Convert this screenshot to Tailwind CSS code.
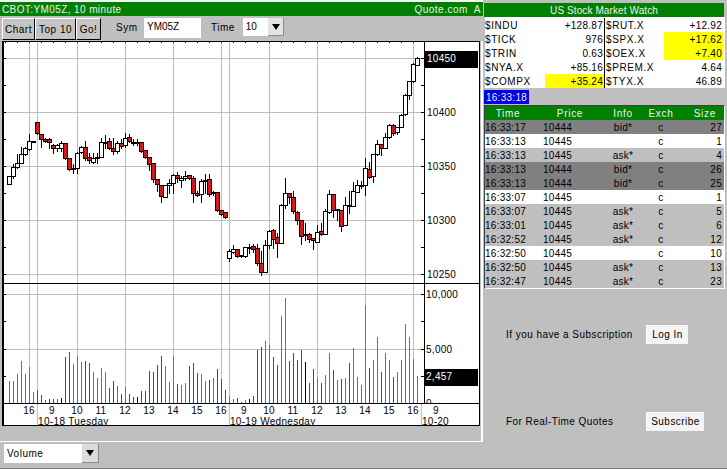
<!DOCTYPE html>
<html lang="en">
<head>
  <meta charset="UTF-8">
  <title>Quote.com - CBOT:YM05Z</title>
  <script src="https://cdn.jsdelivr.net/npm/@tailwindcss/browser@4"></script>
</head>
<body class="bg-[#bfbfbf]">
  <div class="w-[727px] h-[469px] flex overflow-hidden bg-[#bfbfbf] text-[10px] tracking-[0.27px] leading-[16px] text-black font-['Liberation_Sans',Arial,sans-serif] border-b border-[#808080]">

    <!-- left: chart window -->
    <div class="w-[483px] shrink-0 flex flex-col">
      <div class="h-[2px] bg-[#f4f4f4]"></div>
      <div class="h-[14px] bg-[#008000] text-[#f0f0f0] flex justify-between pl-[2px] pr-[2px] tracking-[0.4px]">
        <span>CBOT:YM05Z, 10 minute</span>
        <span class="tracking-[0.5px]">Quote.com&nbsp; A</span>
      </div>
      <div class="h-[25px] flex items-start pl-[2px] pt-[2px] tracking-[0.5px]">
        <button class="h-[22px] w-[33px] pt-[2px] border border-t-white border-l-white border-r-black border-b-black bg-[#c4c4c4]">Chart</button>
        <button class="h-[22px] w-[41px] pt-[2px] border border-t-white border-l-white border-r-black border-b-black bg-[#c4c4c4]">Top 10</button>
        <button class="h-[22px] w-[25px] pt-[2px] border border-t-white border-l-white border-r-black border-b-black bg-[#c4c4c4]">Go!</button>
        <span class="ml-[15px] mt-[2px] w-[28px]">Sym</span>
        <div class="w-[57px] h-[20px] bg-white pl-[3px] pt-[1px] tracking-normal">YM05Z</div>
        <span class="ml-[10px] mt-[2px] w-[32px]">Time</span>
        <div class="w-[25px] h-[18px] bg-white pl-[0px] pt-[1px] tracking-normal">&nbsp;10</div>
        <div class="w-[16px] h-[18px] bg-[#e4e4e4] border-r border-b border-[#8a8a8a] flex items-center justify-center">
          <svg width="8" height="6" viewBox="0 0 8 6"><path d="M0 0H8L4 6Z" fill="#000"/></svg>
        </div>
      </div>
      <div class="h-[401px] border-r-2 border-b border-white">
        <svg id="chart" class="block" width="480" height="385" viewBox="0 41 480 385" font-family="Liberation Sans, Arial, sans-serif" font-size="10" letter-spacing=".27" shape-rendering="crispEdges"></svg>
      </div>
      <div class="flex pl-[4px] pt-[2px]">
        <div class="w-[78px] h-[19px] bg-white pl-[3px] pt-[2px] tracking-[0.5px]">Volume</div>
        <div class="w-[17px] h-[19px] bg-[#dcdcdc] border-r border-b border-[#8a8a8a] flex items-center justify-center">
          <svg width="8" height="6" viewBox="0 0 8 6"><path d="M0 0H8L4 6Z" fill="#000"/></svg>
        </div>
      </div>
    </div>

    <!-- right: market watch and time and sales -->
    <div class="flex-1 flex flex-col pl-[1px]">
      <div class="h-[3px]"></div>
      <div class="h-[14px] mr-[3px] bg-[#008000] text-[#f0f0f0] text-center tracking-[0.1px]">US Stock Market Watch</div>
      <div class="h-[71px] mr-[2px] ml-[1px] bg-white grid grid-cols-[120px_1fr] pt-[1px]">
        <div class="border-r border-black">
          <div class="h-[14px] flex justify-between pr-[1px]"><span class="tracking-[0.6px]">$INDU</span><span>+128.87</span></div>
          <div class="h-[14px] flex justify-between pr-[1px]"><span class="tracking-[0.6px]">$TICK</span><span>976</span></div>
          <div class="h-[14px] flex justify-between pr-[1px]"><span class="tracking-[0.6px]">$TRIN</span><span>0.63</span></div>
          <div class="h-[14px] flex justify-between pr-[1px]"><span class="tracking-[0.6px]">$NYA.X</span><span>+85.16</span></div>
          <div class="h-[14px] flex justify-between"><span class="tracking-[0.6px]">$COMPX</span><span class="w-[59px] h-[14px] bg-[#ffff00] text-right pr-[1px]">+35.24</span></div>
        </div>
        <div class="pl-[1px]">
          <div class="h-[14px] flex justify-between pr-[3px]"><span class="tracking-[0.6px]">$RUT.X</span><span>+12.92</span></div>
          <div class="h-[14px] flex justify-between pr-[2px]"><span class="tracking-[0.6px]">$SPX.X</span><span class="w-[59px] h-[14px] bg-[#ffff00] text-right pr-[1px]">+17.62</span></div>
          <div class="h-[14px] flex justify-between pr-[2px]"><span class="tracking-[0.6px]">$OEX.X</span><span class="w-[59px] h-[14px] bg-[#ffff00] text-right pr-[1px]">+7.40</span></div>
          <div class="h-[14px] flex justify-between pr-[3px]"><span class="tracking-[0.6px]">$PREM.X</span><span>4.64</span></div>
          <div class="h-[14px] flex justify-between pr-[3px]"><span class="tracking-[0.6px]">$TYX.X</span><span>46.89</span></div>
        </div>
      </div>
      <div class="h-[17px] pt-[2px] flex items-start">
        <span class="block w-[45px] h-[14px] bg-[#0000e6] text-[#f0f0f0] text-center">16:33:18</span>
      </div>

      <div class="mr-[2px] border-l border-[#404040] border-t border-t-[#404040] border-b border-b-white border-r border-r-white">
        <div class="h-[14px] flex bg-[#008000] text-[#f0f0f0] tracking-[0.7px]">
          <span class="w-[46px] text-center">Time</span>
          <span class="w-[78px] text-center">Price</span>
          <span class="w-[28px] text-center">Info</span>
          <span class="w-[48px] text-center">Exch</span>
          <span class="flex-1 text-right pr-[8px]">Size</span>
        </div>
        <div class="h-[14px] flex bg-[#808080]"><span class="w-[58px]">16:33:17</span><span class="w-[60px]">10444</span><span class="w-[40px] text-center">bid*</span><span class="w-[36px] text-center">c</span><span class="flex-1 text-right pr-[2px]">27</span></div>
        <div class="h-[14px] flex bg-white"><span class="w-[58px]">16:33:13</span><span class="w-[60px]">10445</span><span class="w-[40px] text-center"></span><span class="w-[36px] text-center">c</span><span class="flex-1 text-right pr-[2px]">1</span></div>
        <div class="h-[14px] flex bg-[#bfbfbf]"><span class="w-[58px]">16:33:13</span><span class="w-[60px]">10445</span><span class="w-[40px] text-center">ask*</span><span class="w-[36px] text-center">c</span><span class="flex-1 text-right pr-[2px]">4</span></div>
        <div class="h-[14px] flex bg-[#808080]"><span class="w-[58px]">16:33:13</span><span class="w-[60px]">10444</span><span class="w-[40px] text-center">bid*</span><span class="w-[36px] text-center">c</span><span class="flex-1 text-right pr-[2px]">26</span></div>
        <div class="h-[14px] flex bg-[#808080]"><span class="w-[58px]">16:33:13</span><span class="w-[60px]">10444</span><span class="w-[40px] text-center">bid*</span><span class="w-[36px] text-center">c</span><span class="flex-1 text-right pr-[2px]">25</span></div>
        <div class="h-[14px] flex bg-white"><span class="w-[58px]">16:33:07</span><span class="w-[60px]">10445</span><span class="w-[40px] text-center"></span><span class="w-[36px] text-center">c</span><span class="flex-1 text-right pr-[2px]">1</span></div>
        <div class="h-[14px] flex bg-[#bfbfbf]"><span class="w-[58px]">16:33:07</span><span class="w-[60px]">10445</span><span class="w-[40px] text-center">ask*</span><span class="w-[36px] text-center">c</span><span class="flex-1 text-right pr-[2px]">5</span></div>
        <div class="h-[14px] flex bg-[#bfbfbf]"><span class="w-[58px]">16:33:01</span><span class="w-[60px]">10445</span><span class="w-[40px] text-center">ask*</span><span class="w-[36px] text-center">c</span><span class="flex-1 text-right pr-[2px]">6</span></div>
        <div class="h-[14px] flex bg-[#bfbfbf]"><span class="w-[58px]">16:32:52</span><span class="w-[60px]">10445</span><span class="w-[40px] text-center">ask*</span><span class="w-[36px] text-center">c</span><span class="flex-1 text-right pr-[2px]">12</span></div>
        <div class="h-[14px] flex bg-white"><span class="w-[58px]">16:32:50</span><span class="w-[60px]">10445</span><span class="w-[40px] text-center"></span><span class="w-[36px] text-center">c</span><span class="flex-1 text-right pr-[2px]">10</span></div>
        <div class="h-[14px] flex bg-[#bfbfbf]"><span class="w-[58px]">16:32:50</span><span class="w-[60px]">10445</span><span class="w-[40px] text-center">ask*</span><span class="w-[36px] text-center">c</span><span class="flex-1 text-right pr-[2px]">13</span></div>
        <div class="h-[14px] flex bg-[#bfbfbf]"><span class="w-[58px]">16:32:47</span><span class="w-[60px]">10445</span><span class="w-[40px] text-center">ask*</span><span class="w-[36px] text-center">c</span><span class="flex-1 text-right pr-[2px]">23</span></div>
      </div>

      <div class="flex items-center mt-[36px] pl-[22px] tracking-[0.45px]">
        <span class="w-[140px]">If you have a Subscription</span>
        <button class="w-[42px] h-[19px] bg-[#f4f4f4] border-t border-l border-white">Log In</button>
      </div>
      <div class="flex items-center mt-[68px] pl-[22px] tracking-[0.45px]">
        <span class="w-[140px]">For Real-Time Quotes</span>
        <button class="w-[58px] h-[19px] bg-[#f4f4f4] border-t border-l border-white">Subscribe</button>
      </div>
    </div>
  </div>

  <script>
    // [body top, body bottom, wick top, wick bottom, red?] in 1/3 px, read off the chart
    const tue = [
      [199,223,199,223,0],[171,199,158,205,0],[160,172,130,175,0],[133,160,108,160,0],[115,133,108,135,0],[94,118,70,120,0],[92,94,90,96,0],
      [37,70,37,72,1],[73,88,70,112,1],[86,92,82,96,1],[86,97,80,115,1],[104,115,100,128,1],[104,115,100,122,0],[100,115,90,122,0],
      [100,145,98,148,1],[145,178,145,180,1],[175,178,160,190,0],[130,174,122,190,0],[112,127,105,130,0],[112,145,90,150,1],[142,151,125,158,1],
      [145,155,125,160,0],[140,142,125,160,0],[97,140,80,140,0],[95,97,72,115,0],[94,115,80,118,1],[113,124,80,132,1],[100,124,90,128,0],
      [100,109,85,115,1],[85,104,67,112,0],[82,94,70,97,1],[97,99,85,105,0],[97,98,85,105,0],[97,124,95,125,1],[121,142,120,145,1],
      [142,163,140,180,1],[160,208,158,215,1],[208,223,205,242,1],[226,258,224,275,1],[226,262,225,262,0],[218,226,205,250,0],[196,220,190,250,0],
      [196,205,182,215,1],[205,211,195,230,0],[199,205,180,210,0],[196,205,195,208,1],[205,250,195,275,1],[250,256,240,258,1],[213,253,205,275,0],
      [211,214,190,250,0],[208,253,190,258,1],[247,250,240,255,0],[247,300,245,302,1],[301,313,298,316,1],[307,322,305,325,1]
    ];
    const wed = [
      [633,653,625,662,0],[626,636,612,640,0],[628,647,625,650,1],[645,649,645,650,0],[622,648,620,650,0],[620,622,610,640,0],[619,628,608,635,1],
      [625,668,610,675,1],[670,697,630,705,1],[616,697,598,697,0],[574,616,568,625,0],[571,598,565,625,1],[592,610,575,652,1],[496,610,488,610,0],
      [460,496,412,505,0],[460,472,455,490,1],[472,514,450,520,1],[517,541,510,552,1],[541,589,540,612,1],[583,586,545,600,0],[583,596,575,605,1],
      [595,600,590,628,1],[577,607,552,607,0],[574,583,545,585,1],[514,583,505,583,0],[463,517,448,520,0],[463,511,462,530,1],[508,511,505,540,0],
      [511,559,508,572,1],[496,556,468,556,0],[494,497,450,520,0],[454,497,422,497,0],[436,455,418,455,0],[436,438,420,445,0],[385,436,352,465,0],
      [388,412,362,415,1],[343,409,342,425,0],[313,343,298,345,0],[313,325,310,345,1],[292,325,275,325,0],[256,292,250,295,0],[256,280,250,285,1],
      [262,277,258,282,0],[226,260,218,262,0],[166,223,158,225,0],[124,166,124,178,0],[73,124,65,125,0],[55,75,48,75,0]
    ];
    // volume bar tops, same 1/3 px units, baseline is y=403. g green, r red, k black
    const vol1 = '303g 303g 282g 243g 282g 261g 336g 330r 345r 360g 357r 357r 357g 354k 231r 216r 252g 228g 246g 243r 249r 276g 294g 264g 276g 324r 303r 318g 342r 320g 342r 351r 351k 333r 333r 273r 276r 255r 228r 258g 306g 228g 312r 315g 309g 258r 249r 279r 282g 303g 300r 294g 267r 297r 330r';
    const vol2 = '348g 357g 354r 366r 360g 357k 348r 210r 201r 183g 195g 231r 255r 108g 54g 243r 219r 240r 210r 246k 309r 267r 294g 309r 285g 219g 270r 300g 297r 294g 249r 204g 291g 315g 75g 264r 240g 171g 276r 219g 240g 291r 276g 240g 132g 171g 237g 288g';

    let s = '';
    const line = (x1, y1, x2, y2, c) => `<line x1="${x1}" y1="${y1}" x2="${x2}" y2="${y2}" stroke="${c}"/>`;
    const label = (x, y, t, c, anchor) => `<text x="${x}" y="${y}" fill="${c || '#000'}" text-anchor="${anchor || 'start'}" shape-rendering="auto">${t}</text>`;

    s += '<rect x="0" y="41" width="480" height="385" fill="#bfbfbf"/>';
    s += '<rect x="3" y="41" width="476" height="384" fill="#fff"/>';

    // grid
    [58, 112, 166, 220, 274, 294, 349].forEach(y => s += line(3, y + .5, 424, y + .5, '#bdbdbd'));
    [29, 37, 77, 125, 173, 221, 229, 269, 317, 365, 413].forEach(x => s += line(x + .5, 41, x + .5, 403, '#bdbdbd'));

    // ticks
    for (let x = 5; x < 424; x += 12) s += line(x + .5, 41, x + .5, 43, '#000');
    [58, 85, 112, 139, 166, 193, 220, 247, 274, 294, 321, 349, 376].forEach(y => {
      s += line(3, y + .5, 6, y + .5, '#000');
      s += line(421, y + .5, 424, y + .5, '#000');
    });

    // candles
    const candle = (i, c, off) => {
      const x = 9 + i * 4;
      const y = v => Math.round(off + v / 3) + .5;
      s += line(x + .5, y(c[2]), x + .5, y(c[3]), '#000');
      s += `<rect x="${x - 1.5}" y="${y(c[0])}" width="4" height="${Math.max(y(c[1]) - y(c[0]), 1)}" fill="${c[4] ? '#d81818' : '#fff'}" stroke="#000"/>`;
    };
    tue.forEach((c, i) => candle(i, c, 110));
    wed.forEach((c, i) => candle(i + 55, c, 40));

    // volume bars
    const colors = { g: '#2f9a3f', r: '#b01850', k: '#000' };
    const bars = (list, start) => list.split(' ').forEach((v, i) => {
      const x = 9 + (start + i) * 4;
      const top = Math.round(280 + parseInt(v) / 3);
      s += `<rect x="${x}" y="${top}" width="1" height="${403 - top}" fill="${colors[v.slice(-1)]}"/>`;
    });
    bars(vol1, 0);
    bars(vol2, 55);

    // right axis
    s += label(426, 407, '0');
    s += '<rect x="3" y="403" width="476" height="22" fill="#fff"/>';
    [37, 229, 421].forEach(x => s += line(x + .5, 403, x + .5, 425, '#bdbdbd'));
    s += '<rect x="425" y="51" width="53" height="17" fill="#000"/>';
    s += label(427, 62, '10450', '#fff');
    [[112, '10400'], [166, '10350'], [220, '10300'], [274, '10250']].forEach(a => s += label(427, a[0] + 4, a[1]));
    s += label(426, 298, '10,000');
    s += label(426, 353, '5,000');
    s += '<rect x="425" y="369" width="53" height="17" fill="#000"/>';
    s += label(426, 380, '2,457', '#fff');

    // time axis
    [[29,16],[52,9],[77,10],[101,11],[125,12],[149,13],[173,14],[197,15],[221,16],[244,9],[269,10],[293,11],[317,12],[341,13],[365,14],[389,15],[413,16],[436,9]]
      .forEach(a => s += label(a[0], 414, a[1], '#000', 'middle'));
    s += `<text x="38" y="425" letter-spacing=".35" shape-rendering="auto">10-18 Tuesday</text>`;
    s += `<text x="230" y="425" letter-spacing=".3" shape-rendering="auto">10-19 Wednesday</text>`;
    s += label(422, 425, '10-20');

    // frame
    s += '<rect x="2" y="41" width="1.5" height="385" fill="#000"/>';
    s += line(2, 41.5, 480, 41.5, '#000');
    s += line(424.5, 41, 424.5, 403, '#000');
    s += line(3, 283.5, 479, 283.5, '#000');
    s += line(3, 403.5, 479, 403.5, '#000');
    s += line(3, 425.5, 480, 425.5, '#000');
    s += line(479.5, 41, 479.5, 426, '#000');

    document.getElementById('chart').innerHTML = s;
  </script>
</body>
</html>
